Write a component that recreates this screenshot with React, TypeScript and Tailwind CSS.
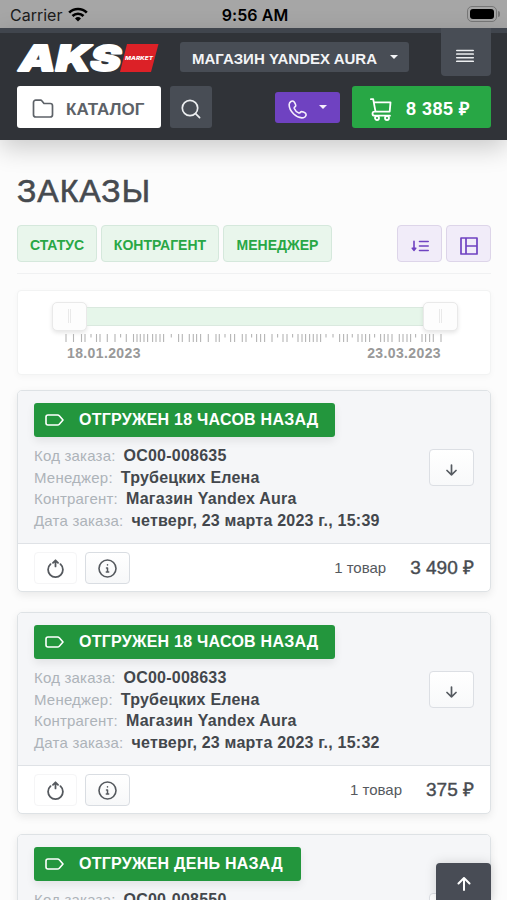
import React from 'react';

const ORDERS = [
  { status: 'Отгружен 18 часов назад', code: 'OC00-008635', date: 'четверг, 23 марта 2023 г., 15:39', total: '3 490 ₽', badge: 'w-[301px]' },
  { status: 'Отгружен 18 часов назад', code: 'OC00-008633', date: 'четверг, 23 марта 2023 г., 15:32', total: '375 ₽', badge: 'w-[301px]' },
  { status: 'Отгружен день назад', code: 'OC00-008550', date: 'среда, 22 марта 2023 г., 12:10', total: '1 240 ₽', badge: 'w-[267px]' },
];

const TICKS = [
  66, 73.5, 81.5, 85, 96.5, 100, 107.3, 115, 126.3, 133.5, 137, 140.3, 144, 147.6, 152.6, 156, 160, 163.6, 178.6, 182.3,
  189.3, 193.3, 196.6, 200.6, 208.3, 216, 219.3, 230.6, 234.6, 242.3, 246, 256.6, 260.6, 264.6, 272, 283, 287, 298, 302,
  305.6, 309.6, 313.3, 317, 320.6, 339.6, 343.6, 347.3, 358, 362, 365.6, 369.6, 380.6, 384.3, 388, 392, 399.3, 403, 407,
  410.6, 422, 425.6, 429.6, 433.3, 441,
];
const SHORT_TICKS = [91, 120.6, 171.3, 225, 251.6, 277.6, 292.6, 326, 333, 352.3, 374.6, 415.6];

const Icon: React.FC<{ className?: string; box?: string; children: React.ReactNode }> = ({ className, box = '0 0 24 24', children }) => (
  <svg viewBox={box} className={className} fill="none" stroke="currentColor" strokeLinecap="round" strokeLinejoin="round">
    {children}
  </svg>
);

const Caret = () => (
  <svg viewBox="0 0 8 4" className="h-1 w-2 shrink-0" fill="currentColor">
    <path d="M0 0h8L4 4z" />
  </svg>
);

const StatusBar = () => (
  <div className="flex h-7 items-center bg-[#a6a6a6] pt-0.5 font-['Inter',sans-serif] text-black">
    <div className="flex flex-1 items-center gap-1.5 pl-2.5">
      <span className="text-[16px] text-[#1c1c1c]">Carrier</span>
      <svg viewBox="0 0 20 15" className="mb-0.5 h-[15px] w-5" fill="none" stroke="currentColor" strokeWidth="2.7">
        <path d="M1.2 5.6a12.5 12.5 0 0 1 17.6 0" />
        <path d="M4.5 9a7.8 7.8 0 0 1 11 0" />
        <path d="M10 14.6l-3-3.1a4.3 4.3 0 0 1 6 0z" fill="currentColor" stroke="none" />
      </svg>
    </div>
    <span className="text-[16px] font-semibold tracking-[0.1px]">9:56 AM</span>
    <div className="flex flex-1 items-center justify-end gap-px pr-[7px]">
      <div className="-mt-0.5 h-4 w-[30px] rounded-[5px] border border-[#777] p-0.5">
        <div className="h-full rounded-[3px] bg-black" />
      </div>
      <div className="-mt-0.5 h-1.5 w-0.5 rounded-r bg-[#777]" />
    </div>
  </div>
);

const Logo = () => (
  <svg viewBox="0 0 142 28" className="h-7 w-[142px] shrink-0 overflow-visible">
    <path d="M110 0h31.500l-7.500 28h-31z" fill="#dc2127" />
    <text x="2" y="27" textLength="102" lengthAdjust="spacingAndGlyphs" fill="#fff" stroke="#fff" strokeWidth="1.800" strokeLinejoin="round" fontFamily="Inter, sans-serif" fontWeight="900" fontStyle="italic" fontSize="36">AKS</text>
    <text x="108" y="15.500" textLength="28" lengthAdjust="spacingAndGlyphs" fill="#fff" fontFamily="Inter, sans-serif" fontWeight="800" fontStyle="italic" fontSize="5">MARKET</text>
  </svg>
);

const Header = () => (
  <header className="relative z-10 h-28 border-t-[5px] border-[#40454d] bg-[#303338] pr-4 pl-[17px] shadow-[0_8px_24px_rgba(0,0,0,0.2)]">
    <div className="flex h-[53px] items-start">
      <div className="mt-[11px]"><Logo /></div>
      <button className="mt-[9px] ml-[21px] flex h-[30px] w-[229px] items-center justify-between rounded-[3px] bg-[#484d55] pr-[11px] pl-3 text-[#f3f4f6]">
        <span className="mt-1 text-[15px] font-bold whitespace-nowrap">МАГАЗИН YANDEX AURA</span>
        <Caret />
      </button>
      <button className="-mt-[5px] ml-auto flex h-[48px] w-[50px] items-center justify-center rounded-b-[4px] bg-[#484d55] pt-2 pr-0.5 text-[#eceef0]">
        <Icon className="h-3.5 w-[18px]" box="0 0 18 14"><path d="M.7 1.500h16.600M.7 5.100h16.600M.7 8.700h16.600M.7 12.300h16.600" strokeWidth="1.500" /></Icon>
      </button>
    </div>
    <div className="flex h-[42px] items-center">
      <button className="flex h-full w-36 items-center rounded-[3px] bg-white pl-[15px] text-[#5d6268]">
        <Icon className="mt-1 h-5 w-[22px]" box="0 0 22 20"><path d="M1.500 3.500v12.200a2.300 2.300 0 0 0 2.300 2.300h14.400a2.300 2.300 0 0 0 2.300-2.300V6.800a2.300 2.300 0 0 0-2.300-2.300H12L9.800 1.800a1.500 1.500 0 0 0-1.200-.6H3.800a2.300 2.300 0 0 0-2.300 2.300z" strokeWidth="1.700" /></Icon>
        <span className="mt-[5px] ml-3 text-[17px] font-bold">КАТАЛОГ</span>
      </button>
      <button className="ml-[9px] flex size-[42px] items-center justify-center rounded-[3px] bg-[#484d55] pt-1 text-[#eceef0]">
        <Icon className="size-5" box="0 0 20 20"><circle cx="9" cy="9" r="7.700" strokeWidth="1.700" /><path d="M14.600 14.600l4 4" strokeWidth="1.700" /></Icon>
      </button>
      <button className="ml-auto flex h-[31px] w-[65px] items-center rounded-[3px] bg-[#6f42c1] pl-[13px] text-[#f5effc]">
        <Icon className="mt-1 mr-3 size-[19px]" box="0 0 19 19"><path d="M5.400 1.300C4.200.6 1.400 1.400 1.200 4.300c-.3 3.500 2 7.300 4.500 9.700 2.400 2.300 6.200 4.300 9.700 3.700 2.700-.5 3.100-3.200 2.200-4.300-.9-1-3.500-2.100-4.500-1.700-.9.400-1.100 1.700-2.300 1.300C9 12.400 7 10.200 6.300 8.500c-.5-1.300 1.200-1.500 1.400-2.600.2-1.200-1.200-4-2.300-4.600z" strokeWidth="1.600" /></Icon>
        <Caret />
      </button>
      <button className="ml-3 flex h-full w-[139px] items-center rounded-[3px] bg-[#28a745] pl-[18px] text-white">
        <Icon className="mt-1 h-[23px] w-[22px]" box="0 0 22 23"><path d="M.9 1.200h2.300l2.300 12.500M4 4.300h16.500l-.8 9.400H4.500a2 2 0 0 0 0 4H20" strokeWidth="1.800" /><circle cx="7" cy="20" r="2" strokeWidth="1.800" /><circle cx="17" cy="20" r="2" strokeWidth="1.800" /></Icon>
        <span className="mt-1 ml-[14px] text-[18px] font-bold tracking-[0.5px] whitespace-nowrap">8 385 ₽</span>
      </button>
    </div>
  </header>
);

const Filters = () => (
  <div className="flex h-[49px] gap-1 border-b border-[#f0f1f2] text-[14px] font-bold text-[#28a745]">
    <button className="h-[37px] w-20 rounded-[4px] border border-[#d5e8dc] bg-[#e9f6ec] pt-[3px]">СТАТУС</button>
    <button className="h-[37px] w-[118px] rounded-[4px] border border-[#d5e8dc] bg-[#e9f6ec] pt-[3px]">КОНТРАГЕНТ</button>
    <button className="h-[37px] w-[109px] rounded-[4px] border border-[#d5e8dc] bg-[#e9f6ec] pt-[3px]">МЕНЕДЖЕР</button>
    <button className="ml-auto flex h-[37px] w-[45px] items-center justify-center rounded-[4px] border border-[#ddd5e9] bg-[#f1ecf9] pt-1 text-[#6f42c1]">
      <Icon className="h-3 w-[18px]" box="0 0 18 12"><path d="M3 1.200v8M8.500 1.500h8.700M8.500 6h8.700M8.500 10.500h8.700" strokeWidth="1.600" /><path d="M1 8.200h4L3 10.600z" fill="currentColor" strokeWidth="1.200" /></Icon>
    </button>
    <button className="flex h-[37px] w-[45px] items-center justify-center rounded-[4px] border border-[#ddd5e9] bg-[#f1ecf9] pt-1 text-[#6f42c1]">
      <Icon className="size-[18px]" box="0 0 18 18"><path d="M1 1h16v16H1zM6 1v16M6 9h11" strokeWidth="1.700" /></Icon>
    </button>
  </div>
);

const Handle = () => (
  <div className="flex h-[29px] w-[35px] justify-center rounded-[5px] border border-[#e9e9e9] bg-[#fdfdfd] pt-1.5 shadow-[0_2px_4px_rgba(0,0,0,0.1)]">
    <div className="h-3.5 w-[3px] border-x border-[#e9e9e9]" />
  </div>
);

const DateRange = () => (
  <div className="mt-4 h-[85px] rounded-[4px] border border-[#f2f3f3] bg-white pt-[11px] shadow-[0_2px_6px_rgba(0,0,0,0.03)]">
    <div className="mr-8 ml-[34px] flex items-center">
      <Handle />
      <div className="h-[19px] flex-1 border-y border-[#dae9df] bg-[#e6f6ea]" />
      <Handle />
    </div>
    <svg viewBox="18 332 472 12" className="h-3 w-[472px]" stroke="#b5b5b5" strokeWidth="1.100">
      {TICKS.map((x) => <path key={x} d={`M${x} 335v8`} />)}
      {SHORT_TICKS.map((x) => <path key={x} d={`M${x} 335v3.500`} />)}
    </svg>
    <div className="mr-[49px] ml-[49px] flex justify-between text-[14px] leading-[21px] font-bold tracking-[0.38px] text-[#999]">
      <span>18.01.2023</span>
      <span>23.03.2023</span>
    </div>
  </div>
);

const Row: React.FC<{ label: string; value: string }> = ({ label, value }) => (
  <div className="flex h-[21.600px] items-center gap-2 whitespace-nowrap">
    <span className="text-[15px] tracking-[0.2px] text-[#adb3b9]">{label}:</span>
    <span className="text-[16px] font-bold tracking-[0.22px] text-[#43474c]">{value}</span>
  </div>
);

const OrderCard: React.FC<{ order: (typeof ORDERS)[number] }> = ({ order }) => (
  <article className="h-[202px] shrink-0 overflow-hidden rounded-[5px] border border-[#dee2e5] bg-white shadow-[0_3px_8px_rgba(0,0,0,0.08)]">
    <div className="flex h-[153px] justify-between border-b border-[#dfe2e6] bg-[#f5f6f8] px-4 pt-3">
      <div>
        <div className={`flex h-[34px] items-center rounded-[3px] bg-[#23963d] pl-[11px] text-white shadow-[0_4px_8px_rgba(0,0,0,0.08)] ${order.badge}`}>
          <Icon className="h-3 w-[19px]" box="0 0 19 12"><path d="M3 1h9.500c.8 0 1.300.2 1.800.8L18 6l-3.700 4.200c-.5.600-1 .8-1.800.8H3a2 2 0 0 1-2-2V3a2 2 0 0 1 2-2z" strokeWidth="1.600" /></Icon>
          <span className="ml-[15px] text-[16px] font-bold tracking-[0.25px] whitespace-nowrap uppercase">{order.status}</span>
        </div>
        <div className="mt-[8.500px]">
          <Row label="Код заказа" value={order.code} />
          <Row label="Менеджер" value="Трубецких Елена" />
          <Row label="Контрагент" value="Магазин Yandex Aura" />
          <Row label="Дата заказа" value={order.date} />
        </div>
      </div>
      <button className="mt-[46px] flex h-[37px] w-[45px] items-center justify-center rounded-[4px] border border-[#dcdfe4] bg-gradient-to-b from-white to-[#f8f9fa] pt-1 text-[#555a60]">
        <Icon className="h-3 w-[11px]" box="0 0 11 12"><path d="M5.500 1v9.800M1 6.500l4.500 4.300L10 6.500" strokeWidth="1.700" /></Icon>
      </button>
    </div>
    <div className="flex h-[47px] items-center px-4 text-[#55595e]">
      <button className="flex h-8 w-[43px] items-center justify-center rounded-[4px] border border-[#f5f5f6] pt-0.5">
        <Icon className="size-[19px]" box="0 0 18 18"><path d="M4.300 4.900a7 7 0 1 0 9.400 0M9 7V1.500M6.600 3.600L9 1.200l2.400 2.400" strokeWidth="1.700" /></Icon>
      </button>
      <button className="ml-2 flex h-8 w-[45px] items-center justify-center rounded-[4px] border border-[#d9dde2] bg-gradient-to-b from-white to-[#f7f8f9] pt-0.5">
        <Icon className="size-[19px]" box="0 0 19 19"><circle cx="9.500" cy="9.500" r="8.500" strokeWidth="1.600" /><path d="M8.500 9h1v4M8.300 13h2.400M9.500 5.800v.2" strokeWidth="1.500" /></Icon>
      </button>
      <span className="mt-0.5 ml-auto text-[15px]">1 товар</span>
      <span className="mt-0.5 ml-6 text-[19px] text-[#484c51] [-webkit-text-stroke:0.4px]">{order.total}</span>
    </div>
  </article>
);

const App: React.FC = () => (
  <div className="relative h-[900px] w-[507px] overflow-hidden bg-[#fcfcfc] font-['Liberation_Sans',sans-serif]">
    <StatusBar />
    <Header />
    <main className="pr-4 pl-[17px]">
      <h1 className="mt-[31px] mb-[14px] h-10 text-[32px] leading-10 tracking-[1px] text-[#464a4f] uppercase [-webkit-text-stroke:0.6px]">Заказы</h1>
      <Filters />
      <DateRange />
      <div className="mt-[15px] flex flex-col gap-5">
        {ORDERS.map((order) => <OrderCard key={order.code} order={order} />)}
      </div>
    </main>
    <button className="absolute right-4 bottom-0 flex h-[37px] w-[55px] items-center justify-center rounded-t-[4px] bg-[#484c55] pt-1 text-white shadow-[0_0_12px_rgba(0,0,0,0.15)]">
      <Icon className="size-3.5" box="0 0 14 14"><path d="M7 13V1M1.500 6.500L7 1l5.500 5.500" strokeWidth="2" /></Icon>
    </button>
  </div>
);

export default App;
